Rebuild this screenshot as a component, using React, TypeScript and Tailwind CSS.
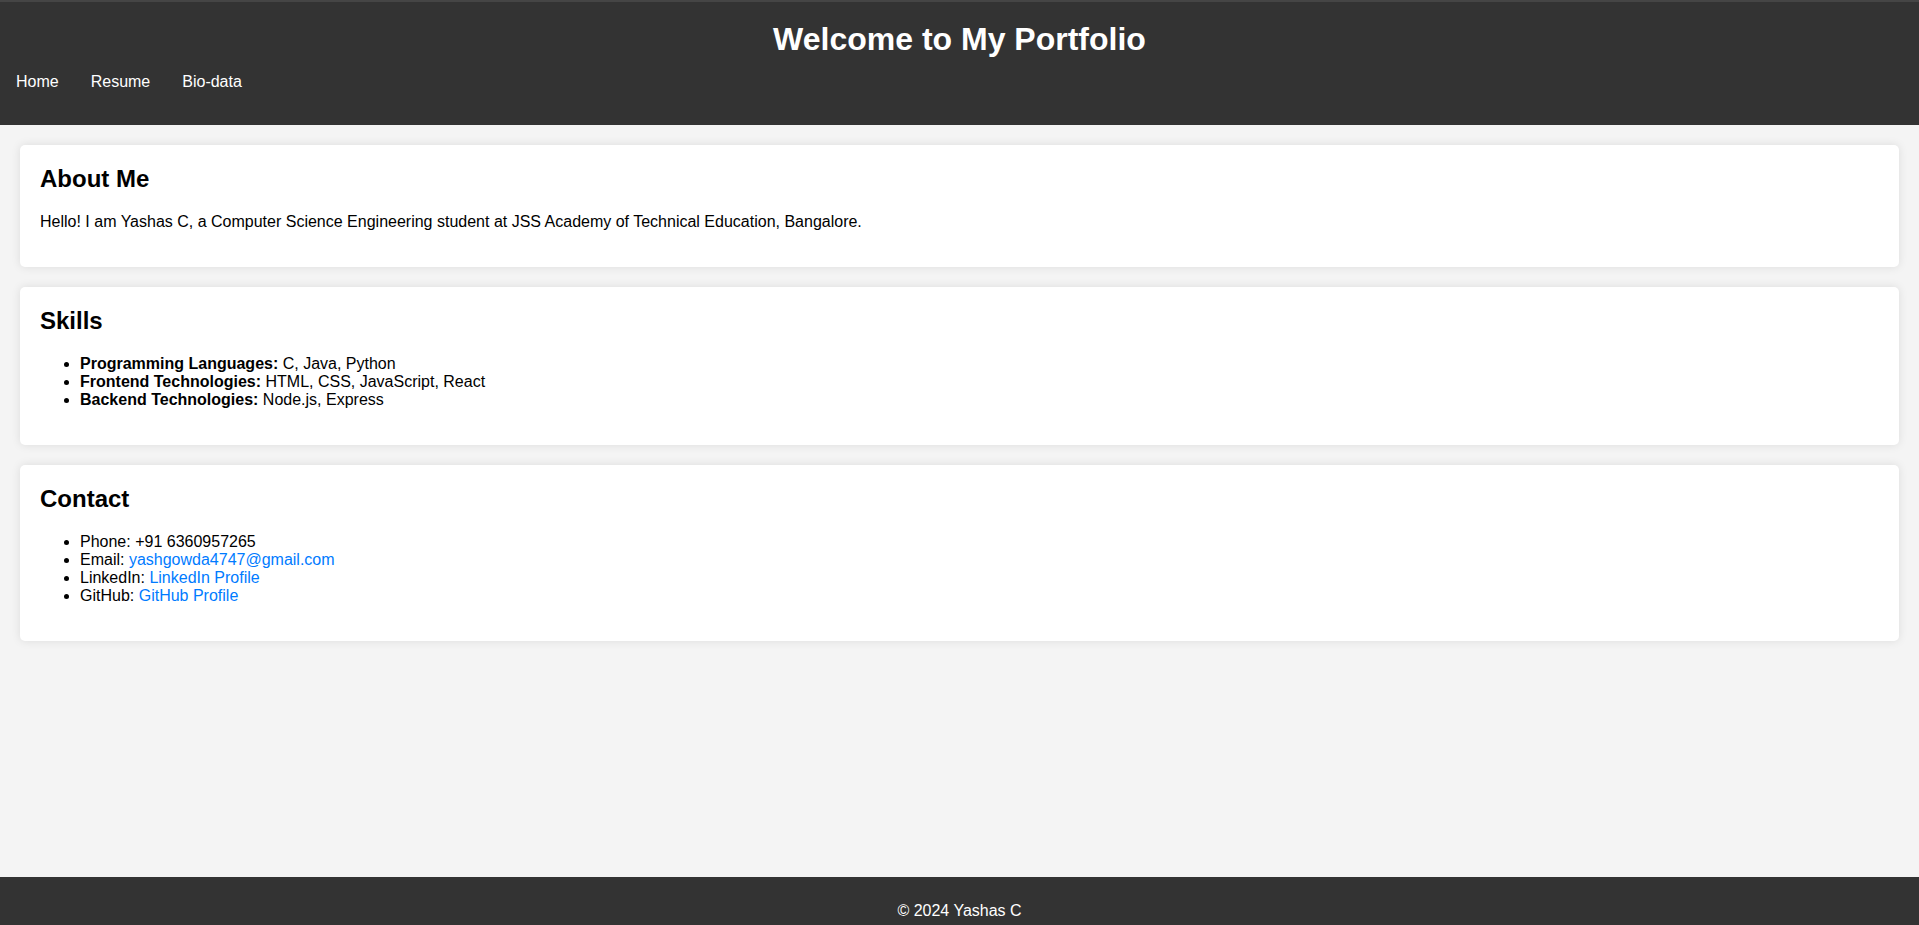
import React from 'react';

const Card: React.FC<{ title: string; children: React.ReactNode }> = ({ title, children }) => (
  <section className="bg-white rounded-[5px] shadow-[0_0_10px_rgba(0,0,0,0.1)] p-5">
    <h2 className="text-[24px] font-bold leading-[28px] mb-5">{title}</h2>
    {children}
  </section>
);

const links = ['Home', 'Resume', 'Bio-data'];

export default function App() {
  return (
    <div className="min-h-screen flex flex-col bg-[#f4f4f4] text-black font-['Liberation_Sans',Arial,sans-serif] text-[16px]">
      {/* Header */}
      <header className="bg-[#333] text-white border-t-2 border-[#454545] pt-[19px] pb-[34px]">
        <h1 className="text-center text-[32px] font-bold leading-[37px]">Welcome to My Portfolio</h1>
        <nav className="mt-[15px] flex gap-8 pl-4 leading-[18px]">
          {links.map((l) => (
            <a key={l} href="#" className="text-white">
              {l}
            </a>
          ))}
        </nav>
      </header>

      {/* Content */}
      <main className="flex-1 p-5 flex flex-col gap-5">
        <Card title="About Me">
          <p className="leading-[18px] mb-4">
            Hello! I am Yashas C, a Computer Science Engineering student at JSS Academy of Technical Education, Bangalore.
          </p>
        </Card>

        <Card title="Skills">
          <ul className="list-disc pl-10 leading-[18px] mb-4">
            <li>
              <strong>Programming Languages:</strong> C, Java, Python
            </li>
            <li>
              <strong>Frontend Technologies:</strong> HTML, CSS, JavaScript, React
            </li>
            <li>
              <strong>Backend Technologies:</strong> Node.js, Express
            </li>
          </ul>
        </Card>

        <Card title="Contact">
          <ul className="list-disc pl-10 leading-[18px] mb-4">
            <li>Phone: +91 6360957265</li>
            <li>
              Email: <a href="#" className="text-[#007bff]">yashgowda4747@gmail.com</a>
            </li>
            <li>
              LinkedIn: <a href="#" className="text-[#007bff]">LinkedIn Profile</a>
            </li>
            <li>
              GitHub: <a href="#" className="text-[#007bff]">GitHub Profile</a>
            </li>
          </ul>
        </Card>
      </main>

      {/* Footer */}
      <footer className="h-12 bg-[#333] text-white text-center pt-[25px] leading-[18px]">
        <p>&copy; 2024 Yashas C</p>
      </footer>
    </div>
  );
}
